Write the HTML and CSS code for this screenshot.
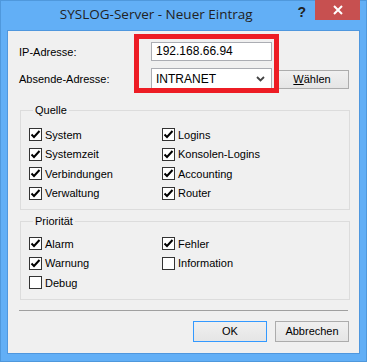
FILE: index.html
```html
<!DOCTYPE html>
<html lang="de">
<head>
    <meta charset="UTF-8">
    <title>SYSLOG-Server - Neuer Eintrag</title>
    <link rel="stylesheet" href="styles.css">
</head>
<body>
    <div class="window">
        <div class="titlebar">
            <div class="title">SYSLOG-Server - Neuer Eintrag</div>
            <div class="help">?</div>
            <div class="close">
                <svg width="12" height="10" viewBox="0 0 12 10"><path d="M2 1 L10 9 M10 1 L2 9" stroke="#fff" stroke-width="2"/></svg>
            </div>
        </div>

        <div class="client">
            <div class="form">
                <label>IP-Adresse:</label>
                <div class="textbox">192.168.66.94</div>
                <div></div>
                <label>Absende-Adresse:</label>
                <div class="combo">
                    <span>INTRANET</span>
                    <svg width="9" height="6" viewBox="0 0 9 6"><path d="M1 1 L4.5 4.5 L8 1" stroke="#444" stroke-width="1.8" fill="none"/></svg>
                </div>
                <button class="btn"><u>W</u>ählen</button>
            </div>
            <div class="highlight"></div>

            <fieldset class="group">
                <legend>Quelle</legend>
                <div class="checks">
                    <label class="check"><span class="box on"></span>System</label>
                    <label class="check"><span class="box on"></span>Logins</label>
                    <label class="check"><span class="box on"></span>Systemzeit</label>
                    <label class="check"><span class="box on"></span>Konsolen-Logins</label>
                    <label class="check"><span class="box on"></span>Verbindungen</label>
                    <label class="check"><span class="box on"></span>Accounting</label>
                    <label class="check"><span class="box on"></span>Verwaltung</label>
                    <label class="check"><span class="box on"></span>Router</label>
                </div>
            </fieldset>

            <fieldset class="group prio">
                <legend>Priorität</legend>
                <div class="checks">
                    <label class="check"><span class="box on"></span>Alarm</label>
                    <label class="check"><span class="box on"></span>Fehler</label>
                    <label class="check"><span class="box on"></span>Warnung</label>
                    <label class="check"><span class="box"></span>Information</label>
                    <label class="check"><span class="box"></span>Debug</label>
                </div>
            </fieldset>

            <div class="separator"></div>
            <div class="actions">
                <button class="btn default">OK</button>
                <button class="btn">Abbrechen</button>
            </div>
        </div>
    </div>
</body>
</html>
```

FILE: styles.css
```css
body {
    margin: 0;
    font-family: "Liberation Sans", Arial, sans-serif;
    font-size: 11px;
    color: #000;
}
.window {
    width: 367px;
    height: 362px;
    box-sizing: border-box;
    background-color: #62aff6;
    border: 1px solid #4f98dc;
    padding: 0 6px 7px 6px;
    display: flex;
    flex-direction: column;
}
.titlebar {
    height: 29px;
    display: flex;
    align-items: flex-start;
}
.title {
    flex: 1;
    text-align: center;
    font-family: "Open Sans", "Noto Sans", sans-serif;
    font-size: 13.5px;
    color: #222;
    padding-top: 4px;
    padding-left: 8px;
}
.help {
    font-family: "Liberation Sans", Arial, sans-serif;
    font-weight: bold;
    font-size: 14px;
    color: #222;
    margin-top: 3px;
    margin-right: 9px;
}
.close {
    width: 45px;
    height: 20px;
    margin-top: -1px;
    background-color: #c75050;
    display: flex;
    align-items: center;
    justify-content: center;
}
.client {
    flex: 1;
    position: relative;
    background-color: #f0f0f0;
    border: 1px solid #4f97de;
    padding: 11px 10px 0 11px;
}
.form {
    display: grid;
    grid-template-columns: 129px 121px 74px;
    grid-template-rows: 19px 22px;
    column-gap: 3px;
    row-gap: 7px;
    align-items: center;
}
.textbox, .combo {
    box-sizing: border-box;
    background: #fff;
    border: 1px solid #abadb3;
    padding-left: 4px;
    font-size: 12px;
}
.textbox {
    height: 19px;
    line-height: 17px;
}
.combo {
    height: 22px;
    display: flex;
    align-items: center;
    justify-content: space-between;
    padding-right: 6px;
}
.highlight {
    position: absolute;
    left: 126px;
    top: 3px;
    width: 135px;
    height: 49px;
    border: 5px solid #ed1c24;
}
.btn {
    box-sizing: border-box;
    height: 19px;
    padding: 0;
    font-family: "Liberation Sans", Arial, sans-serif;
    font-size: 11px;
    color: #000;
    background: linear-gradient(#f0f0f0, #e5e5e5);
    border: 1px solid #acacac;
}
.group {
    margin: 14px 0 0 1px;
    padding: 9px 0 6px 8px;
    width: 330px;
    box-sizing: border-box;
    border: 1px solid #dcdcdc;
}
.group legend {
    padding: 0 2px;
    margin-left: 4px;
}
.prio {
    margin-top: 5px;
    padding-top: 7px;
}
.checks {
    display: grid;
    grid-template-columns: 133px 1fr;
    grid-auto-rows: 19.5px;
}
.check {
    display: flex;
    align-items: center;
    gap: 3px;
}
.box {
    width: 13px;
    height: 13px;
    box-sizing: border-box;
    border: 1px solid #333;
    background: #fff;
}
.box.on {
    background: #fff url("data:image/svg+xml,%3Csvg xmlns='http://www.w3.org/2000/svg' width='11' height='11'%3E%3Cpath d='M1.5 5.5 L4 8 L9.5 2' stroke='black' stroke-width='2' fill='none'/%3E%3C/svg%3E") no-repeat center;
}
.separator {
    margin: 10px 1px 0 0;
    border-top: 1px solid #a0a0a0;
}
.actions {
    display: flex;
    justify-content: flex-end;
    gap: 8px;
    margin-top: 10px;
}
.actions .btn {
    width: 74px;
    height: 21px;
}
.btn.default {
    border-color: #3399ff;
}
```
